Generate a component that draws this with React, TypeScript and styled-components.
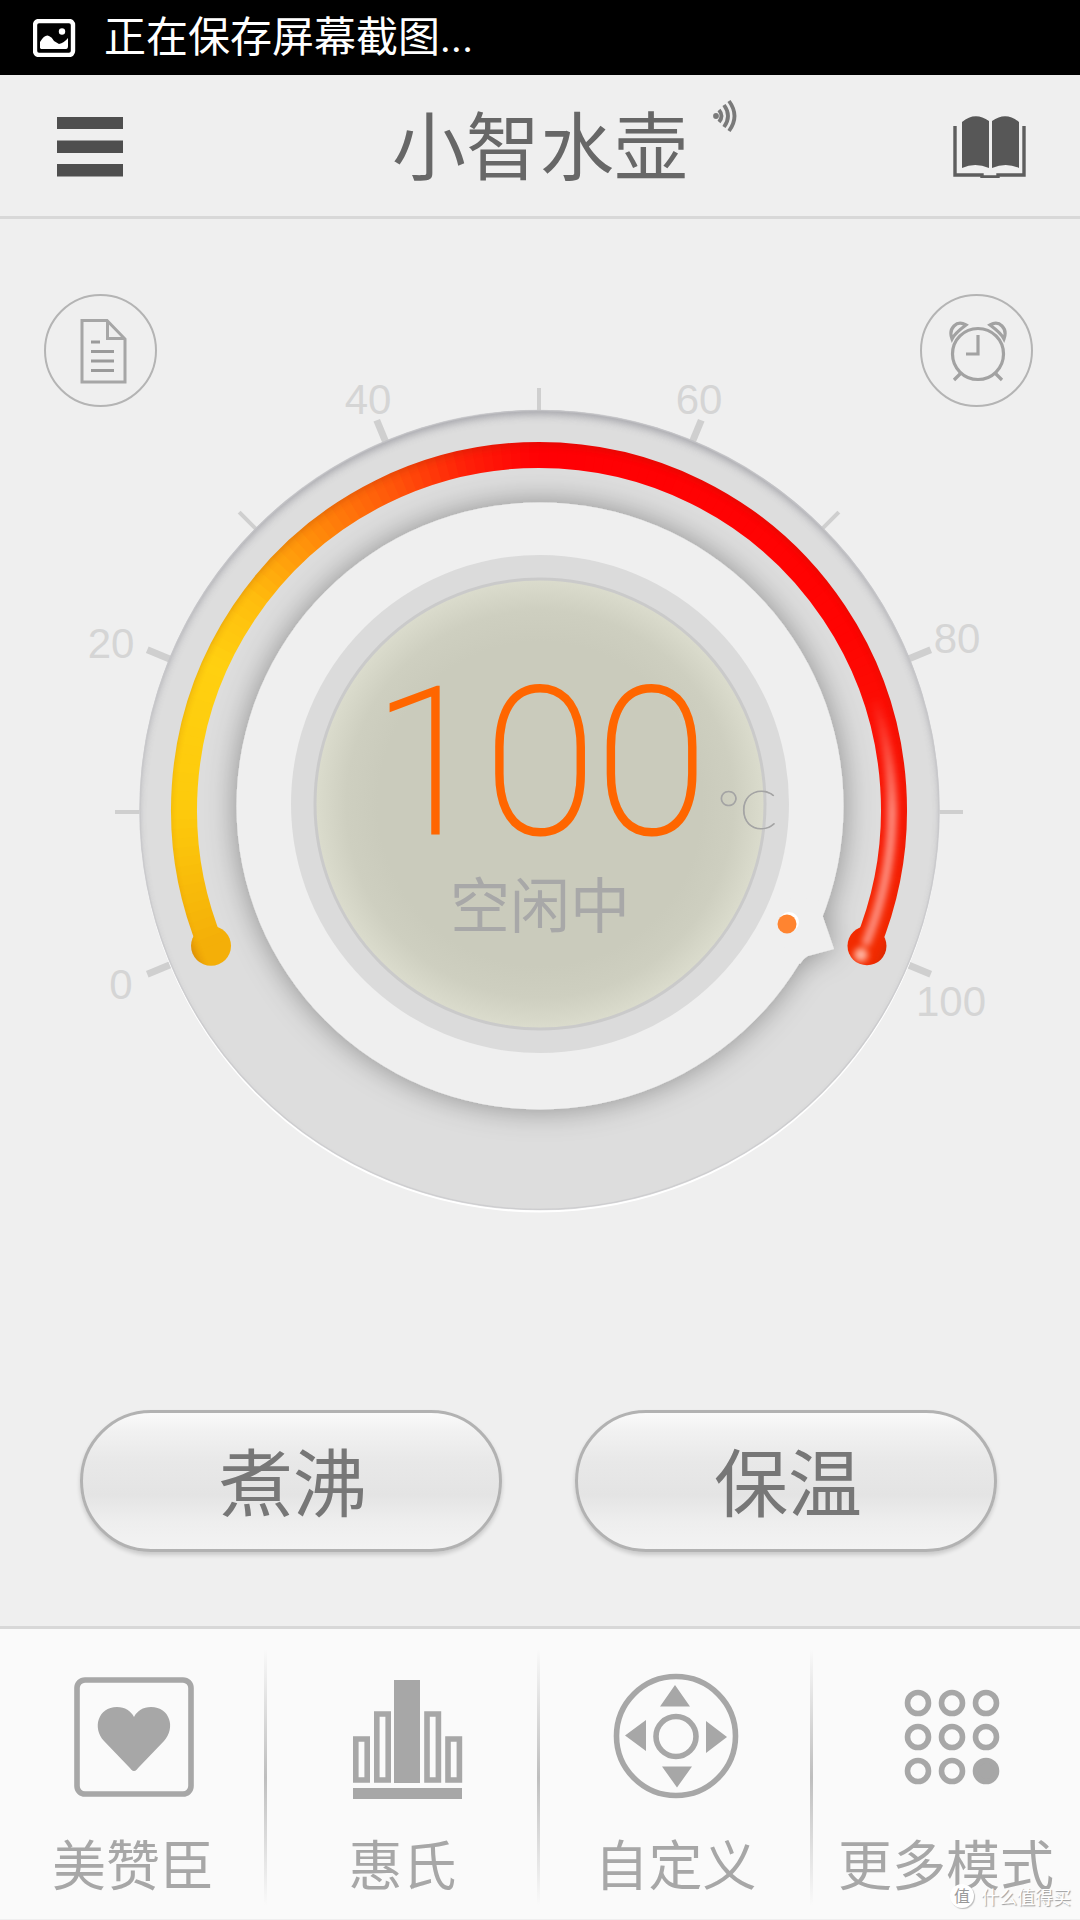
import React from "react";
import styled, { createGlobalStyle } from "styled-components";

const cjk = `"Noto Sans CJK SC", sans-serif`;

const GlobalStyle = createGlobalStyle`
  *, *::before, *::after { box-sizing: border-box; }
  body { margin: 0; background: #efefef; font-family: Roboto, ${cjk}; }
  button { margin: 0; padding: 0; border: 0; background: none; color: inherit; font: inherit; cursor: pointer; }
  svg { display: block; }
`;

const Page = styled.div`
  position: relative;
  display: flex;
  flex-direction: column;
  min-height: 100vh;
  background: #efefef;
`;

const StatusBar = styled.div`
  display: flex;
  align-items: center;
  gap: 28px;
  height: 75px;
  padding: 0 33px;
  background: #000;
  color: #fff;
  font-size: 42px;
  line-height: 60px;
`;

const Header = styled.header`
  display: grid;
  grid-template-columns: 1fr auto 1fr;
  align-items: center;
  height: 144px;
  padding: 0 53px;
  border-bottom: 3px solid #d8d8d8;
`;

const HeaderButton = styled.button<{ $end?: boolean }>`
  justify-self: ${(p) => (p.$end ? "end" : "start")};
`;

const Title = styled.h1`
  position: relative;
  margin: 0;
  padding-bottom: 8px;
  color: #676767;
  font: 400 74px/110px ${cjk};
`;

const Signal = styled.span`
  position: absolute;
  left: 100%;
  top: 12px;
  margin-left: 24px;
`;

const Main = styled.main`
  flex: 1;
  display: flex;
  flex-direction: column;
`;

const Stage = styled.section`
  display: grid;
  justify-items: center;
  > * { grid-area: 1 / 1; }
`;

const Shortcuts = styled.div`
  z-index: 1;
  justify-self: stretch;
  align-self: start;
  display: flex;
  justify-content: space-between;
  padding: 75px 47px 0 44px;
`;

const RoundButton = styled.button`
  display: grid;
  place-items: center;
  width: 113px;
  height: 113px;
  border: 2px solid #b4b4b4;
  border-radius: 50%;
`;

const DialDrawing = styled.svg`
  width: 100%;
  max-width: 1080px;
  height: auto;
`;

const ScaleText = styled.text`
  fill: #d5d5d5;
  font: 400 42px "Liberation Sans", sans-serif;
  text-anchor: middle;
`;

const Readout = styled.div`
  align-self: start;
  display: flex;
  flex-direction: column;
  align-items: center;
  padding-top: 445px;
`;

const Temperature = styled.output`
  position: relative;
  color: #ff6600;
  font: 100 204px/200px Roboto, sans-serif;
  -webkit-text-stroke: 3px #ff6600;
`;

const Unit = styled.span`
  position: absolute;
  left: 100%;
  bottom: 25px;
  padding-left: 10px;
  color: #a4a4a4;
  font: 100 54px/60px Lato, sans-serif;
  -webkit-text-stroke: 1px #a4a4a4;
`;

const State = styled.span`
  color: #a8a8a8;
  font: 400 60px/76px ${cjk};
`;

const Actions = styled.div`
  display: grid;
  grid-template-columns: 1fr 1fr;
  gap: 73px;
  margin-top: auto;
  padding: 0 83px 74px 80px;
`;

const ActionButton = styled.button`
  height: 142px;
  padding: 0 0 4px 4px;
  border: 3px solid #b2b2b2;
  border-radius: 71px;
  background: linear-gradient(#fafafa 0%, #f1f1f1 14%, #e8e8e8 36%, #e4e4e4 60%, #eeeeee 80%, #f3f3f3 100%);
  box-shadow: 0 3px 4px rgba(0, 0, 0, 0.16);
  color: #777;
  font: 400 74px/110px ${cjk};
`;

const Modes = styled.nav`
  display: grid;
  grid-template-columns: 266fr 273fr 273fr 268fr;
  height: 294px;
  border-top: 3px solid #d8d8d8;
  border-bottom: 1px solid #efefef;
  background: #fafafa;
`;

const ModeButton = styled.button`
  position: relative;
  display: flex;
  flex-direction: column;
  align-items: center;
  gap: 24px;
  padding-top: 44px;
  color: #a7a7a7;
  font: 400 54px/80px ${cjk};
  white-space: nowrap;

  & + &::before {
    content: "";
    position: absolute;
    left: -2px;
    top: 20px;
    width: 3px;
    height: 256px;
    background: linear-gradient(rgba(190, 190, 190, 0), #bebebe 50%, rgba(190, 190, 190, 0));
  }
`;

const Watermark = styled.div`
  position: absolute;
  right: 9px;
  bottom: 10px;
  display: flex;
  align-items: center;
  gap: 7px;
  color: #fff;
  font: 400 18px/28px ${cjk};
  text-shadow: 1px 1px 1px #999;
`;

const Seal = styled.span`
  width: 24px;
  height: 24px;
  border-radius: 50%;
  background: #fff;
  box-shadow: 1px 1px 1px #bbb;
  color: #999;
  font-size: 16px;
  line-height: 22px;
  text-align: center;
  text-shadow: none;
`;

const CX = 539;
const CY = 810;
const ARC = 355;

const polar = (deg: number, r: number): [number, number] => {
  const a = (deg * Math.PI) / 180;
  return [CX + r * Math.sin(a), CY - r * Math.cos(a)];
};

const arcPath = (from: number, to: number, r: number) => {
  const [x1, y1] = polar(from, r);
  const [x2, y2] = polar(to, r);
  return `M${x1.toFixed(2)} ${y1.toFixed(2)}A${r} ${r} 0 ${to - from > 180 ? 1 : 0} 1 ${x2.toFixed(2)} ${y2.toFixed(2)}`;
};

const stops: [number, number[]][] = [
  [-113, [244, 174, 8]],
  [-90, [253, 202, 12]],
  [-66, [255, 208, 16]],
  [-54, [255, 190, 14]],
  [-38, [255, 134, 10]],
  [-24, [255, 84, 10]],
  [-12, [255, 32, 8]],
  [0, [255, 0, 4]],
  [60, [255, 4, 2]],
  [95, [246, 28, 6]],
  [113, [242, 44, 0]],
];

const colorAt = (deg: number) => {
  const i = Math.max(1, stops.findIndex(([d]) => d >= deg));
  const [d0, a] = stops[i - 1];
  const [d1, b] = stops[i];
  const t = (deg - d0) / (d1 - d0);
  return `rgb(${a.map((v, k) => Math.round(v + (b[k] - v) * t)).join(",")})`;
};

const segments = Array.from({ length: 150 }, (_, i) => -112.5 + i * 1.5);
const glints = Array.from({ length: 28 }, (_, i) => 70.5 + i * 1.5);

const labels = [
  { v: 0, x: 121, y: 999 },
  { v: 20, x: 111, y: 658 },
  { v: 40, x: 368, y: 414 },
  { v: 60, x: 699, y: 414 },
  { v: 80, x: 957, y: 653 },
  { v: 100, x: 951, y: 1016 },
];

function Dial() {
  const [lx, ly] = polar(-112.5, ARC);
  const [rx, ry] = polar(112.5, ARC);
  return (
    <DialDrawing viewBox="0 219 1080 1020" aria-hidden="true">
      <defs>
        <radialGradient id="lcd">
          <stop offset="0.72" stopColor="#cacbbc" />
          <stop offset="0.86" stopColor="#cecfc0" />
          <stop offset="1" stopColor="#dbdccd" />
        </radialGradient>
        <filter id="soft" x="-20%" y="-20%" width="140%" height="140%"><feGaussianBlur stdDeviation="4" /></filter>
        <filter id="glow" x="-50%" y="-20%" width="200%" height="140%"><feGaussianBlur stdDeviation="3" /></filter>
        <filter id="lift" x="-20%" y="-20%" width="140%" height="140%">
          <feDropShadow dx="0" dy="0" stdDeviation="15" floodColor="#000" floodOpacity="0.36" />
        </filter>
        <clipPath id="plate"><circle cx="539.500" cy="810" r="400" /></clipPath>
        <mask id="track" maskUnits="userSpaceOnUse" x="0" y="219" width="1080" height="1020">
          <path d={arcPath(-112.5, 112.5, ARC)} fill="none" stroke="#fff" strokeWidth="26" />
          <circle cx={lx} cy={ly} r="20" fill="#fff" />
          <circle cx={rx} cy={ry} r="19.500" fill="#fff" />
        </mask>
      </defs>

      {Array.from({ length: 11 }, (_, i) => {
        const deg = -112.5 + i * 22.5;
        const [x1, y1] = polar(deg, 394);
        const [x2, y2] = polar(deg, 424);
        return (
          <line key={i} x1={x1} y1={y1 + 2} x2={x2} y2={y2 + 2} stroke="#cfcfcf" strokeWidth={i % 2 ? 4 : 7} />
        );
      })}
      {labels.map((l) => <ScaleText key={l.v} x={l.x} y={l.y}>{l.v}</ScaleText>)}

      <circle cx="539.500" cy="812.500" r="400" fill="#fff" />
      <circle cx="539.500" cy="810" r="400" fill="#ddd" />
      <g clipPath="url(#plate)">
        <circle cx="539.500" cy="816" r="408" fill="none" stroke="#8c8c94" strokeWidth="12" opacity="0.75" filter="url(#soft)" />
      </g>
      <circle cx="539.500" cy="810" r="399.500" fill="none" stroke="#c8c8ca" strokeWidth="1.500" opacity="0.7" />

      <g filter="url(#lift)">
        <circle cx="540" cy="806" r="303.500" fill="#efefef" />
        <path d="M818 898Q821 908 823 917L834 949L808 956Q804 958 800 964L740 900Z" fill="#efefef" />
      </g>
      <circle cx="540" cy="804" r="249" fill="#dbdbdb" />
      <circle cx="540" cy="804" r="225" fill="url(#lcd)" stroke="#cacaca" strokeWidth="3" />

      <g mask="url(#track)">
        <circle cx={lx} cy={ly} r="21" fill={colorAt(-112)} />
        <circle cx={rx} cy={ry} r="21" fill={colorAt(112)} />
        {segments.map((d) => (
          <path key={d} d={arcPath(d, Math.min(d + 1.9, 112.5), ARC)} fill="none" stroke={colorAt(d + 0.7)} strokeWidth="28" />
        ))}
        <g filter="url(#glow)">
          {glints.map((d, i) => (
            <path key={d} d={arcPath(d, d + 1.5, ARC - 2)} fill="none" stroke="#ff9a8c" strokeOpacity={Math.min(0.9, i / 14)} strokeWidth="9" />
          ))}
          <circle cx={rx - 6} cy={ry + 9} r="7" fill="#ffb4a0" />
        </g>
        <circle cx="539" cy="815" r="375" fill="none" stroke="#8a2000" strokeWidth="8" opacity="0.32" filter="url(#soft)" />
      </g>

      <circle cx="789" cy="922" r="10" fill="#fff" />
      <circle cx="787" cy="924" r="9.500" fill="#ff8430" />
    </DialDrawing>
  );
}

const PictureIcon = () => (
  <svg width="43" height="38" viewBox="0 0 43 38" aria-hidden="true">
    <rect x="2" y="2" width="38" height="34" rx="4" fill="none" stroke="#fff" strokeWidth="4.400" />
    <path d="M7 29V23Q12 15 16 17Q19 18 21 22L26 25Q31 24 35 19V27Q35 30 33 30H8Z" fill="#fff" />
    <circle cx="29" cy="12.500" r="3.200" fill="#fff" />
  </svg>
);

const MenuIcon = () => (
  <svg width="74" height="70" viewBox="0 0 74 70" fill="#4e4e4e" aria-hidden="true">
    <path d="M4 6h66v12H4zM4 29.500h66v12.500H4zM4 53h66v12.500H4z" />
  </svg>
);

const BookIcon = () => (
  <svg width="74" height="64" viewBox="0 0 74 64" aria-hidden="true">
    <path d="M9 7Q22-4 36 6V53Q22 47 9 53ZM39 6Q53-4 66 7V53Q53 47 39 53Z" fill="#575757" transform="translate(0 1)" />
    <path d="M2 12V61H29V63H45V61H71V12" fill="none" stroke="#5e5e5e" strokeWidth="3.400" />
  </svg>
);

const SignalIcon = () => (
  <svg width="28" height="34" viewBox="0 0 28 34" fill="none" stroke="#7a7a7a" strokeWidth="3.800" aria-hidden="true">
    <circle cx="4" cy="17" r="2.900" fill="#7a7a7a" stroke="none" />
    <path d="M7 11Q12 17 7 23M12 6Q20 17 12 28M17 2Q28 17 17 32" />
  </svg>
);

const DocumentIcon = () => (
  <svg width="54" height="66" viewBox="-8 0 54 66" fill="none" stroke="#a6a6a6" strokeWidth="3" aria-hidden="true">
    <path d="M0 2.500H25L43 21V64H0ZM25.500 2.500V20.500H42" />
    <path d="M9 24H18M9 33.500H32M9 43H32M9 52.500H32" stroke="#9a9a9a" />
  </svg>
);

const AlarmIcon = () => (
  <svg width="62" height="62" viewBox="0 0 62 62" fill="none" stroke="#a2a2a2" strokeWidth="3.200" aria-hidden="true">
    <circle cx="32" cy="34" r="25.500" />
    <path d="M32 15V34H20M15 53L8 60M49 53L56 60" />
    <path d="M20 5Q13 1 8 6Q3 11 6 19Q9 13 20 5ZM44 5Q51 1 56 6Q61 11 58 19Q55 13 44 5Z" />
  </svg>
);

const ModeIcon = styled.svg.attrs({ width: 126, height: 126, viewBox: "0 0 126 126", "aria-hidden": true })`
  flex: none;
`;

const HeartIcon = () => (
  <ModeIcon>
    <rect x="7" y="7" width="114" height="114" rx="8" fill="none" stroke="#a7a7a7" strokeWidth="5.600" />
    <path d="M64 98C62 98 61 96 58 93L34 68C22 55 28 34 47 34C55 34 61 38 64 44C67 38 73 34 81 34C100 34 106 55 94 68L70 93C67 96 66 98 64 98Z" fill="#a7a7a7" />
  </ModeIcon>
);

const BarsIcon = () => (
  <ModeIcon fill="none" stroke="#a7a7a7" strokeWidth="5.600">
    <path d="M54 7h26v103H54zM13 115h109v12H13z" fill="#a7a7a7" stroke="none" />
    <path d="M15.800 66h11.400v41H15.800zM36.800 41h11.400v66H36.800zM87 41h11.400v66H87zM108 66h11.400v41H108z" />
  </ModeIcon>
);

const PadIcon = () => (
  <ModeIcon fill="none" stroke="#a7a7a7" strokeWidth="5.600">
    <circle cx="63" cy="63" r="59.500" />
    <circle cx="63" cy="63.500" r="20" />
    <path d="M62 12L77 33.500H47ZM64 114.500L49 93.500H79ZM12 62.500L33 47V78ZM114 64L93 48V80Z" fill="#a7a7a7" stroke="none" />
  </ModeIcon>
);

const GridIcon = () => (
  <ModeIcon fill="none" stroke="#a7a7a7" strokeWidth="5.600">
    {[0, 1, 2].map((r) =>
      [0, 1, 2].map((c) => (
        <circle key={`${r}${c}`} cx={35 + c * 34} cy={30 + r * 34} r="10.500" fill={r + c === 4 ? "#a7a7a7" : "none"} />
      ))
    )}
  </ModeIcon>
);

const modes = [
  { name: "美赞臣", Icon: HeartIcon },
  { name: "惠氏", Icon: BarsIcon },
  { name: "自定义", Icon: PadIcon },
  { name: "更多模式", Icon: GridIcon },
];

export default function App() {
  return (
    <Page>
      <GlobalStyle />
      <StatusBar>
        <PictureIcon />
        <span>正在保存屏幕截图...</span>
      </StatusBar>
      <Header>
        <HeaderButton aria-label="菜单"><MenuIcon /></HeaderButton>
        <Title>
          小智水壶
          <Signal><SignalIcon /></Signal>
        </Title>
        <HeaderButton $end aria-label="手册"><BookIcon /></HeaderButton>
      </Header>
      <Main>
        <Stage>
          <Dial />
          <Shortcuts>
            <RoundButton aria-label="记录"><DocumentIcon /></RoundButton>
            <RoundButton aria-label="闹钟"><AlarmIcon /></RoundButton>
          </Shortcuts>
          <Readout>
            <Temperature>
              100<Unit>°C</Unit>
            </Temperature>
            <State>空闲中</State>
          </Readout>
        </Stage>
        <Actions>
          <ActionButton>煮沸</ActionButton>
          <ActionButton>保温</ActionButton>
        </Actions>
      </Main>
      <Modes>
        {modes.map(({ name, Icon }) => (
          <ModeButton key={name}>
            <Icon />
            <span>{name}</span>
          </ModeButton>
        ))}
      </Modes>
      <Watermark>
        <Seal>值</Seal>
        <span>什么值得买</span>
      </Watermark>
    </Page>
  );
}
